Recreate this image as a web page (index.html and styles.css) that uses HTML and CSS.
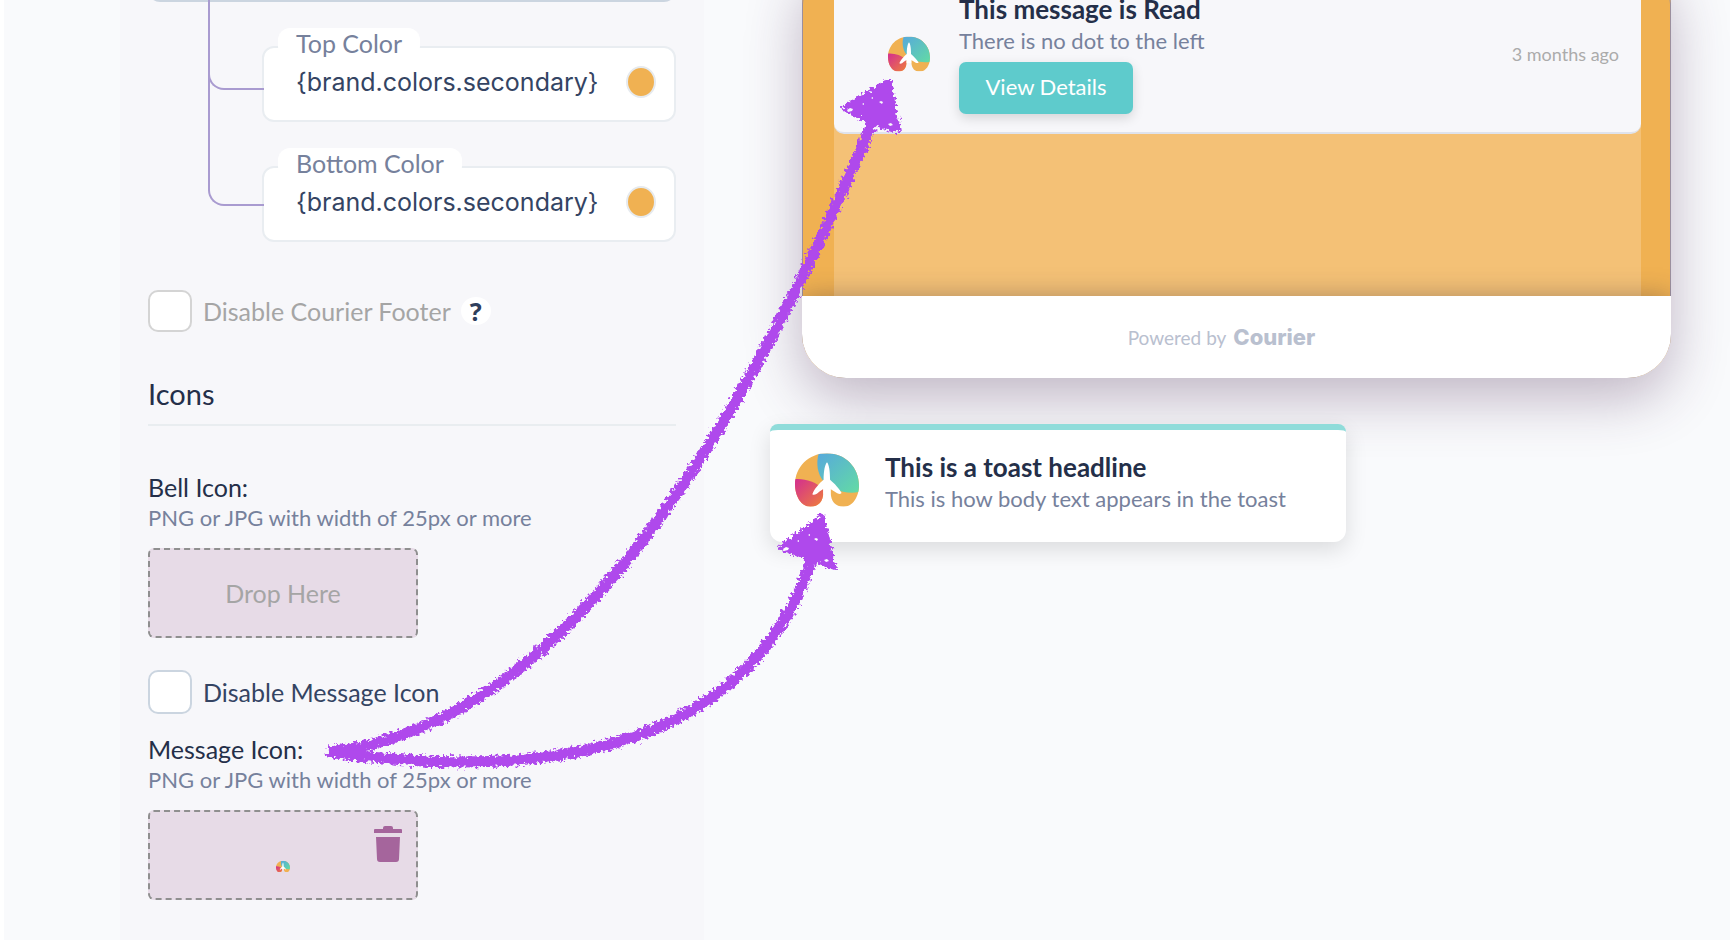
FILE: index.html
```html
<!DOCTYPE html>
<html lang="en">
<head>
<meta charset="utf-8">
<title>Brand designer</title>
<link rel="stylesheet" href="styles.css">
</head>
<body>
<svg class="defs" width="0" height="0" aria-hidden="true">
  <defs>
    <linearGradient id="sky" x1="0" y1="0" x2="1" y2="1">
      <stop offset="0" stop-color="#57a9dc"/><stop offset="1" stop-color="#63dba4"/>
    </linearGradient>
    <linearGradient id="dusk" x1="0" y1="0" x2="1" y2="1">
      <stop offset="0" stop-color="#d32e90"/><stop offset="1" stop-color="#ef7f3c"/>
    </linearGradient>
    <clipPath id="lungs">
      <path d="M0 92C0 40 40 0 94 0s94 42 94 94c0 34-18 63-45 63-24 0-38-16-38-41V96H83v20c0 25-14 41-38 41C18 157 0 126 0 92Z"/>
    </clipPath>
    <symbol id="logo" viewBox="0 0 188 157">
      <g clip-path="url(#lungs)">
        <path fill="#f0b152" d="M0 0h188v157H0z"/>
        <path fill="url(#sky)" d="M70 0C60 32 68 62 82 80c22 24 62 42 106 34V0Z"/>
        <path fill="url(#dusk)" d="M0 76c32-2 58 8 83 28v53H0Z"/>
      </g>
      <path fill="#fff" d="M94 26c6 6 9 26 9 52 12 10 28 27 34 39-3 5-14 1-20-4l-13-8v14H83v-14l-12 8c-7 7-16 12-20 7 4-12 20-32 33-42 0-26 4-46 10-52Z"/>
    </symbol>
  </defs>
</svg>

<main class="page">
  <section class="panel">
    <div class="select-edge"></div>
    <div class="tree">
      <div class="field">
        <label class="field-label" for="top-color">Top Color</label>
        <input class="field-input" id="top-color" type="text" value="{brand.colors.secondary}">
        <button class="swatch" type="button" aria-label="Pick top color"></button>
      </div>
      <div class="field">
        <label class="field-label" for="bottom-color">Bottom Color</label>
        <input class="field-input" id="bottom-color" type="text" value="{brand.colors.secondary}">
        <button class="swatch" type="button" aria-label="Pick bottom color"></button>
      </div>
    </div>

    <div class="check-row check-footer">
      <input class="check check-muted" id="no-footer" type="checkbox">
      <label class="check-label label-muted" for="no-footer">Disable Courier Footer</label>
      <button class="help" type="button">?</button>
    </div>

    <h2 class="section-title">Icons</h2>

    <h3 class="setting-title">Bell Icon:</h3>
    <p class="hint">PNG or JPG with width of 25px or more</p>
    <button class="dropzone" type="button">Drop Here</button>

    <div class="check-row check-message">
      <input class="check" id="no-icon" type="checkbox">
      <label class="check-label" for="no-icon">Disable Message Icon</label>
    </div>

    <h3 class="setting-title">Message Icon:</h3>
    <p class="hint">PNG or JPG with width of 25px or more</p>
    <div class="dropzone">
      <svg class="logo-tiny" role="img" aria-label="Message icon"><use href="#logo"/></svg>
      <button class="trash" type="button" aria-label="Remove icon">
        <svg viewBox="0 0 28 36" width="28" height="36"><path fill="currentColor" d="M9 3V2q0-2 2-2h6q2 0 2 2v1h8q1 0 1 1v3H0V4q0-1 1-1ZM2 11h24l-1 22q0 3-3 3H6q-3 0-3-3Z"/></svg>
      </button>
    </div>
  </section>

  <section class="preview">
    <div class="inbox">
      <div class="inbox-body">
        <article class="message">
          <svg class="logo-message" role="img" aria-label="Brand"><use href="#logo"/></svg>
          <div class="message-text">
            <h3 class="headline">This message is Read</h3>
            <p class="body-text">There is no dot to the left</p>
            <button class="details" type="button">View Details</button>
          </div>
          <time class="age">3 months ago</time>
        </article>
      </div>
      <footer class="inbox-footer">Powered by <span class="wordmark">Courier</span></footer>
    </div>

    <article class="toast">
      <svg class="logo-toast" role="img" aria-label="Brand"><use href="#logo"/></svg>
      <div>
        <h3 class="headline">This is a toast headline</h3>
        <p class="body-text">This is how body text appears in the toast</p>
      </div>
    </article>
  </section>

  <svg class="arrows" width="1000" height="940" viewBox="0 0 1000 940" aria-hidden="true">
    <defs>
      <filter id="crayon" filterUnits="userSpaceOnUse" x="300" y="50" width="640" height="740">
        <feTurbulence type="fractalNoise" baseFrequency="0.3" numOctaves="3" seed="4" result="grain"/>
        <feDisplacementMap in="SourceGraphic" in2="grain" scale="10" xChannelSelector="R" yChannelSelector="G"/>
      </filter>
    </defs>
    <g filter="url(#crayon)" stroke="#af49ec" fill="none">
      <path stroke-width="11" d="M328 752C560 728 740 440 876 114"/>
      <path stroke-width="11" d="M328 752C560 784 752 744 813 556"/>
      <path stroke-width="4" stroke-linejoin="round" fill="#af49ec" d="M889 80 844 108 869 122 899 132Z"/>
      <path stroke-width="4" stroke-linejoin="round" fill="#af49ec" d="M822 516 780 548 806 558 835 568Z"/>
    </g>
    <path fill="#f7f7fa" d="M847 110l3-2 3 1-1 2-4 1ZM879 102l2-1 2 1-1 2ZM862 104l2-1v2ZM888 124l3-1 2 2-3 1ZM871 98l2-1v2Z"/>
    <path fill="#fff" d="M783 549l3-2 3 1-1 2-4 1ZM814 539l2-1 2 1-1 2ZM797 541l2-1v2ZM824 560l3-1 2 2-3 1ZM808 535l2-1v2Z"/>
  </svg>
</main>
</body>
</html>
```
FILE: styles.css
```css
* { box-sizing: border-box; }

body {
  margin: 0;
  color: #242f49;
  background: #f9fafc;
  font-family: Lato, "Open Sans", sans-serif;
  font-size: 24px;
}

h2, h3, p { margin: 0; font-weight: 400; }
button { padding: 0; border: 0; font: inherit; cursor: pointer; }

.defs { position: absolute; }

.page {
  position: relative;
  display: flex;
  min-height: 100vh;
  padding-left: 116px;
  border-left: 4px solid #fff;
  overflow: hidden;
}

/* Settings column */
.panel {
  flex: 0 0 584px;
  min-width: 0;
  padding: 0 28px;
  background: #f7f7fa;
}

.select-edge {
  height: 24px;
  margin-top: -22px;
  border: 2px solid #cbd5e0;
  border-radius: 12px;
}

.tree {
  display: flex;
  flex-direction: column;
  gap: 44px;
  padding: 44px 0 0 114px;
}

.field {
  position: relative;
  display: flex;
  align-items: center;
  height: 76px;
  padding: 0 18px 4px 32px;
  background: #fff;
  border: 2px solid #e9edf1;
  border-radius: 12px;
}

.field::before {
  content: "";
  position: absolute;
  right: 100%;
  bottom: 30px;
  width: 54px;
  height: 140px;
  border: solid #a99bd0;
  border-width: 0 0 2px 2px;
  border-bottom-left-radius: 16px;
}

.field:last-child::before { bottom: 34px; }

.field-label {
  position: absolute;
  top: -20px;
  left: 14px;
  padding: 0 18px;
  border-radius: 12px;
  background: #fff;
  color: #76819c;
  font-size: 25px;
  line-height: 30px;
}

.field-input {
  flex: 1;
  width: 0;
  min-width: 0;
  padding: 0;
  border: 0;
  outline: 0;
  color: #344463;
  background: transparent;
  font-family: Inter, sans-serif;
  font-size: 25px;
}

.swatch {
  width: 30px;
  height: 32px;
  border: 2px solid #e6eaee;
  border-radius: 50%;
  background: #f0b152;
}

.check-row { display: flex; align-items: center; }
.check-footer { margin-top: 48px; }
.check-message { margin: 32px 0 18px; }

.check {
  width: 44px;
  height: 44px;
  margin: 0 11px 0 0;
  appearance: none;
  background: #fff;
  border: 2px solid #cbd5e0;
  border-radius: 10px;
}

.check-muted { height: 42px; border-color: #d4d4d4; }
.check-label { color: #344463; font-size: 25px; }
.label-muted { color: #a5a5a5; }

.help {
  width: 30px;
  height: 28px;
  margin-left: 10px;
  border-radius: 50%;
  background: #fff;
  color: #2f3e5c;
  font: 700 25px/28px "Noto Sans", sans-serif;
}

.section-title {
  margin: 44px 0 44px;
  padding-bottom: 12px;
  border-bottom: 2px solid #e9edf0;
  font-size: 29px;
  line-height: 36px;
}

.setting-title { font-size: 25px; line-height: 34px; }

.hint {
  margin-bottom: 16px;
  color: #76819c;
  font-size: 22px;
  line-height: 28px;
}

.dropzone {
  position: relative;
  display: flex;
  align-items: center;
  justify-content: center;
  width: 270px;
  height: 90px;
  border: 2px dashed #8f8f8f;
  border-radius: 6px;
  background: #e7dbe7;
  color: #a5a5a5;
  font-size: 25px;
}

.logo-tiny { width: 14px; height: 13px; margin-top: 22px; }

.trash {
  position: absolute;
  top: 14px;
  right: 14px;
  height: 36px;
  background: none;
  color: #a5659c;
}

.trash svg { display: block; }

/* Preview column */
.preview { flex: 1; min-width: 0; }

.inbox {
  margin: -40px 59px 0 98px;
  border-radius: 44px;
  outline: 1px solid #9b8f9e;
  outline-offset: -1px;
  background: #f0b152;
  box-shadow: 0 20px 56px rgba(72, 36, 80, 0.32);
  overflow: hidden;
}

.inbox-body {
  display: flow-root;
  min-height: 336px;
  padding: 0 30px 0 32px;
  background: linear-gradient(#f4c176, #f4c176) content-box;
}

.message {
  display: flex;
  align-items: center;
  padding: 33px 22px 18px 54px;
  border-bottom: 2px solid #dfe3ec;
  border-radius: 0 0 10px 10px;
  background: #f7f7fa;
}

.message-text { flex: 1; }
.logo-message { width: 42px; height: 38px; margin: 0 29px 0 0; }

.headline { font-size: 26px; font-weight: 700; line-height: 32px; }
.body-text { color: #76819c; font-size: 22px; line-height: 32px; }

.details {
  width: 174px;
  height: 52px;
  margin-top: 5px;
  padding-bottom: 4px;
  border-radius: 7px;
  background: #5ecbcc;
  box-shadow: 0 4px 12px rgba(0, 0, 0, 0.14);
  color: #fff;
  font-size: 22px;
}

.age { color: #ababab; font-size: 18px; }

.inbox-footer {
  position: relative;
  display: flex;
  align-items: center;
  justify-content: center;
  gap: 7px;
  height: 82px;
  padding-right: 30px;
  background: #fff;
  box-shadow: 0 0 24px rgba(60, 50, 60, 0.38);
  color: #b9c0cf;
  font-size: 19px;
}

.wordmark { font-family: Inter, sans-serif; font-size: 22px; font-weight: 800; }

.toast {
  position: relative;
  display: flex;
  gap: 26px;
  width: 576px;
  max-width: 90%;
  height: 118px;
  margin: 46px 0 0 66px;
  padding: 21px 25px;
  border-top: 6px solid #8fdcda;
  border-radius: 8px 8px 12px 12px;
  background: #fff;
  box-shadow: 0 8px 22px rgba(0, 0, 0, 0.12);
}

.logo-toast { width: 64px; height: 58px; }

/* Hand-drawn callouts over the page */
.arrows {
  position: absolute;
  top: 0;
  left: -4px;
  pointer-events: none;
}
```
